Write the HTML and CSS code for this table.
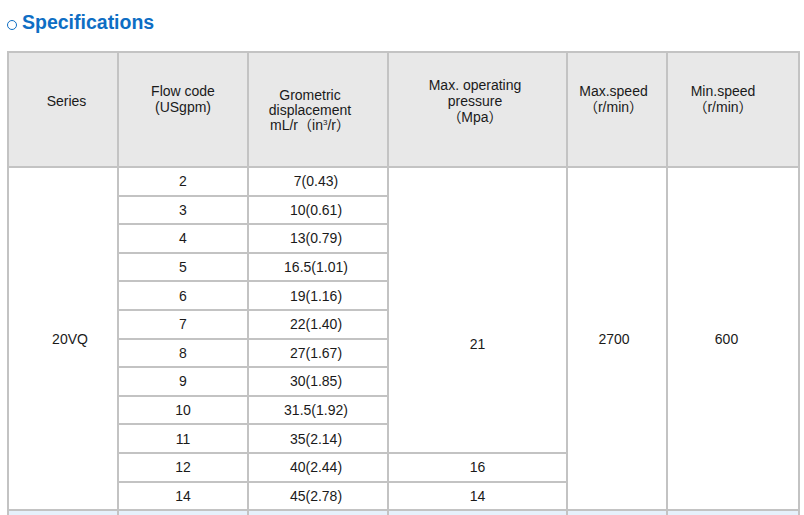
FILE: index.html
```html
<!DOCTYPE html>
<html>
<head>
<meta charset="utf-8">
<link rel="stylesheet" href="styles.css">
</head>
<body>
<div class="title"><span class="ring"></span><span class="title-text">Specifications</span></div>
<table class="spec">
  <colgroup>
    <col class="c1"><col class="c2"><col class="c3"><col class="c4"><col class="c5"><col class="c6">
  </colgroup>
  <thead>
    <tr class="head">
      <th class="h-series">Series</th>
      <th class="two">Flow code<br>(USgpm)</th>
      <th class="geo">Grometric<br>displacement<br>mL/r（in<sup>3</sup>/r）</th>
      <th class="h-press">Max. operating<br>pressure<br>（Mpa）</th>
      <th class="two h-max">Max.speed<br>（r/min）</th>
      <th class="two h-min">Min.speed<br>（r/min）</th>
    </tr>
  </thead>
  <tbody>
    <tr><td rowspan="12" class="d-series">20VQ</td><td>2</td><td class="d-geo">7(0.43)</td><td rowspan="10" class="p21">21</td><td rowspan="12" class="d-max">2700</td><td rowspan="12" class="d-min">600</td></tr>
    <tr><td>3</td><td class="d-geo">10(0.61)</td></tr>
    <tr><td>4</td><td class="d-geo">13(0.79)</td></tr>
    <tr><td>5</td><td class="d-geo">16.5(1.01)</td></tr>
    <tr><td>6</td><td class="d-geo">19(1.16)</td></tr>
    <tr><td>7</td><td class="d-geo">22(1.40)</td></tr>
    <tr><td>8</td><td class="d-geo">27(1.67)</td></tr>
    <tr><td>9</td><td class="d-geo">30(1.85)</td></tr>
    <tr><td>10</td><td class="d-geo">31.5(1.92)</td></tr>
    <tr><td>11</td><td class="d-geo">35(2.14)</td></tr>
    <tr><td>12</td><td class="d-geo">40(2.44)</td><td>16</td></tr>
    <tr><td>14</td><td class="d-geo">45(2.78)</td><td>14</td></tr>
    <tr class="next"><td></td><td></td><td></td><td></td><td></td><td></td></tr>
  </tbody>
</table>
</body>
</html>
```

FILE: styles.css
```css
html, body {
  margin: 0;
  padding: 0;
  background: #ffffff;
  overflow: hidden;
}

body {
  font-family: "Liberation Sans", Arial, "Noto Sans CJK SC", sans-serif;
  color: #1a1a1a;
}

.title {
  height: 51px;
  padding: 12px 0 0 7px;
  box-sizing: border-box;
  line-height: 20px;
  color: #0e6ec4;
}

.ring {
  display: inline-block;
  width: 8px;
  height: 8px;
  border: 1.4px solid #0e6ec4;
  border-radius: 50%;
  margin-right: 5px;
  vertical-align: -1px;
}

.title-text {
  font-size: 19.5px;
  font-weight: bold;
}

.spec {
  border-collapse: collapse;
  margin-left: 7px;
  width: 791px;
  table-layout: fixed;
  font-size: 14px;
}

.c1 { width: 110px; }
.c2 { width: 130px; }
.c3 { width: 140px; }
.c4 { width: 179px; }
.c5 { width: 100px; }
.c6 { width: 132px; }

.spec th,
.spec td {
  border: 2px solid #c3c3c3;
  text-align: center;
  vertical-align: middle;
  padding: 0;
  font-weight: normal;
}

.spec th {
  background: #e8e8e8;
  line-height: 16px;
  padding-bottom: 18px;
}

.spec th.two { padding-bottom: 22px; }
.spec th.h-series { padding-left: 7px; }
.spec th.geo {
  line-height: 15px;
  padding-bottom: 0;
  padding-top: 2px;
  padding-right: 16px;
}
.spec th.h-press { padding-right: 5px; }
.spec th.h-max { padding-right: 7px; }
.spec th.h-min { padding-right: 20px; }

.spec td.d-series { padding-left: 14px; }
.spec td.d-geo { padding-right: 4px; }
.spec td.d-max { padding-right: 6px; }
.spec td.d-min { padding-right: 13px; }

.spec sup {
  font-size: 8px;
  line-height: 0;
  vertical-align: 5px;
}

.head {
  height: 115px;
}

.spec tbody tr {
  height: 28.6px;
}

.spec td.p21 {
  padding-top: 68px;
}

.spec tr.next td {
  background: #e6f1fb;
}
```
